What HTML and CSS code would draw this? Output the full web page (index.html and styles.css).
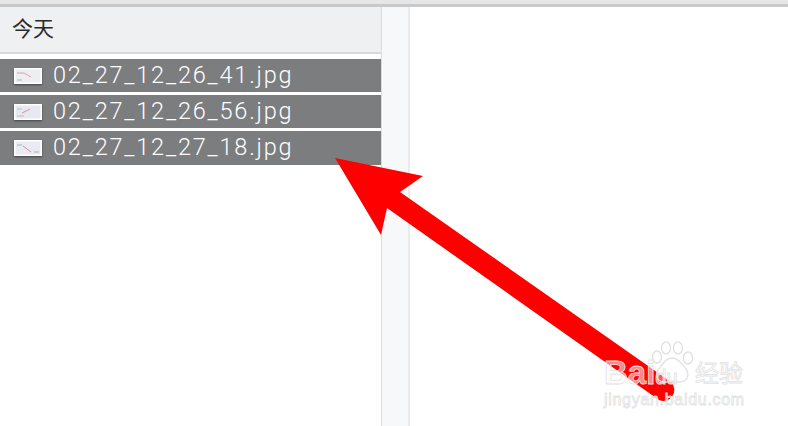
FILE: index.html
```html
<!DOCTYPE html>
<html lang="zh">
<head>
<meta charset="utf-8">
<title>今天</title>
<link rel="stylesheet" href="styles.css">
</head>
<body>
<div class="window">
  <div class="topbar"></div>
  <div class="panes">
    <section class="list">
      <header class="list-head">今天</header>
      <ul class="rows">
        <li class="row">
          <svg class="thumb" viewBox="0 0 28 16"><rect width="28" height="16" fill="#fff"/><rect x="1.5" y="1.5" width="25" height="13" fill="#eceef2"/><path d="M3 5h7l7 4" fill="none" stroke="#e0a0b0" stroke-width="1"/><path d="M3 12h5" stroke="#b0b4ba"/></svg>
          <span class="name">02_27_12_26_41.jpg</span>
        </li>
        <li class="row">
          <svg class="thumb" viewBox="0 0 28 16"><rect width="28" height="16" fill="#fff"/><rect x="1.5" y="1.5" width="25" height="13" fill="#e6e9ef"/><path d="M8 9l8-4" fill="none" stroke="#dd8fa5" stroke-width="1"/><path d="M3 5h5M3 12h7" stroke="#b8bcc4"/></svg>
          <span class="name">02_27_12_26_56.jpg</span>
        </li>
        <li class="row row-last">
          <svg class="thumb" viewBox="0 0 28 16"><rect width="28" height="16" fill="#fff"/><rect x="1.5" y="1.5" width="25" height="13" fill="#e8ebf1"/><path d="M9 6l8 6" fill="none" stroke="#d88aa0" stroke-width="1"/><path d="M3 5h5M20 12h5" stroke="#aab0ba"/></svg>
          <span class="name">02_27_12_27_18.jpg</span>
        </li>
      </ul>
    </section>
    <div class="rail"></div>
    <div class="detail"></div>
  </div>
</div>

<svg class="arrow" viewBox="0 0 788 426" aria-hidden="true">
  <path d="M335 158L423 176L400 192L671 382A11 11 0 0 1 659 400L387 208L381 235Z" fill="#fe0000"/>
</svg>

<div class="mark">
  <svg class="paw" viewBox="0 0 44 44" aria-hidden="true">
    <g fill="rgba(255,255,255,0.35)" stroke="#e2e2e2" stroke-width="1.4">
      <ellipse cx="6" cy="16" rx="4.5" ry="6"/>
      <ellipse cx="15" cy="7" rx="4.5" ry="6"/>
      <ellipse cx="27" cy="7" rx="4.5" ry="6"/>
      <ellipse cx="37" cy="17" rx="4.5" ry="6"/>
      <path d="M21 17c6 0 10 6 14 11c4 6 1 13-6 13c-4 0-5-1-8-1s-5 2-9 1c-6-1-8-7-5-12c4-5 7-12 14-12Z"/>
    </g>
  </svg>
  <span class="mark-logo">Bai<small>du</small></span>
  <span class="mark-cn">经验</span>
  <span class="mark-url">jingyan.baidu.com</span>
</div>
</body>
</html>
```
FILE: styles.css
```css
html, body {
  margin: 0;
  padding: 0;
  background: #fff;
}
body {
  width: 788px;
  height: 426px;
  overflow: hidden;
  position: relative;
  font-family: "Roboto", "Noto Sans", "Noto Sans CJK SC", sans-serif;
}
.window {
  display: flex;
  flex-direction: column;
  height: 426px;
}
.topbar {
  height: 4px;
  background: #e6e6e6;
  border-bottom: 3px solid #c9c9c9;
}
.panes {
  flex: 1;
  display: flex;
  min-height: 0;
}
.list {
  width: 381px;
  border-right: 1px solid #dcdcde;
}
.list-head {
  height: 45px;
  box-sizing: border-box;
  background: #eef0f2;
  display: flex;
  align-items: center;
  padding-left: 12px;
  padding-bottom: 5px;
  font-family: "Noto Sans CJK SC", sans-serif;
  font-size: 21px;
  color: #2a2a2a;
}
.rows {
  list-style: none;
  margin: 0;
  padding: 5px 0 0;
  border-top: 2px solid #d9d9d9;
  display: flex;
  flex-direction: column;
  gap: 3px;
}
.row {
  height: 33px;
  background: #7c7d7f;
  display: flex;
  align-items: center;
  gap: 11px;
  padding-left: 14px;
  color: #fff;
  font-size: 23.5px;
  letter-spacing: 1.8px;
  font-family: "Roboto", "Open Sans", sans-serif;
  font-weight: 300;
  white-space: nowrap;
}
.row-last {
  height: 34px;
}
.name {
  position: relative;
  top: -1px;
}
.thumb {
  width: 28px;
  height: 16px;
  flex: none;
  box-shadow: 0 1px 2px rgba(0, 0, 0, 0.45);
}
.rail {
  width: 26px;
  background: #f7f8fa;
  border-right: 2px solid #e9ebee;
}
.detail {
  flex: 1;
  background: #fff;
}
.arrow {
  position: absolute;
  left: 0;
  top: 0;
  width: 788px;
  height: 426px;
}
.mark {
  position: absolute;
  left: 604px;
  top: 340px;
  width: 170px;
  height: 70px;
  color: rgba(255, 255, 255, 0.55);
  font-family: "Liberation Sans", sans-serif;
  -webkit-text-stroke: 0.8px #e2e2e2;
}
.paw {
  position: absolute;
  left: 47px;
  top: 1px;
  width: 44px;
  height: 44px;
}
.mark-logo {
  position: absolute;
  left: 0;
  top: 15px;
  font-size: 33px;
  font-weight: 700;
  line-height: 36px;
}
.mark-logo small {
  font-size: 20px;
  font-weight: 400;
}
.mark-cn {
  position: absolute;
  left: 91px;
  top: 16px;
  font-family: "Noto Sans CJK SC", sans-serif;
  font-size: 24px;
  line-height: 32px;
}
.mark-url {
  position: absolute;
  left: 0;
  top: 50px;
  font-size: 16px;
  line-height: 20px;
  letter-spacing: 0.7px;
}
```
